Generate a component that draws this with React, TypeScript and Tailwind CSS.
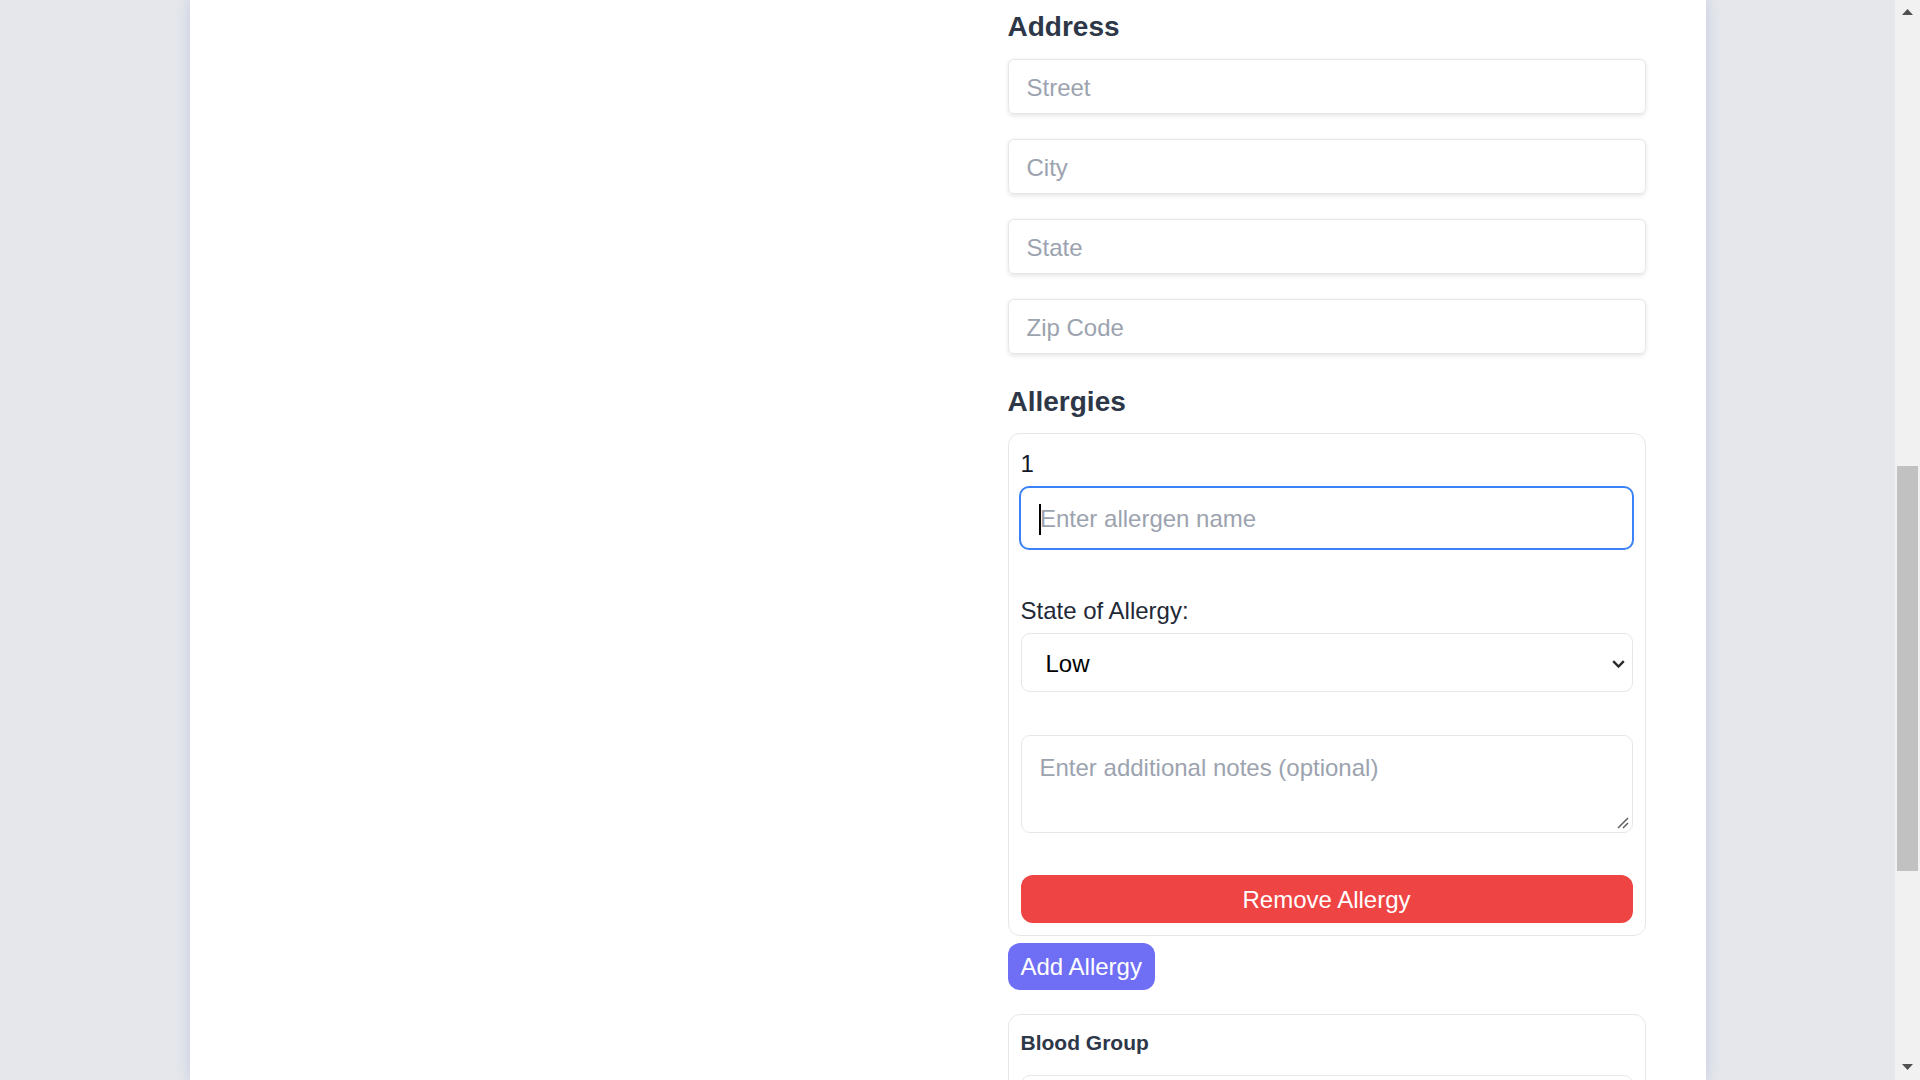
import { ReactNode } from 'react'

function Field({ children }: { children: ReactNode }) {
  return (
    <div className="flex h-[55px] items-center rounded-[6px] border border-[#e5e7eb] px-[18px] pt-[2px] text-[24px] text-[#9ca3af] shadow-[0_1.5px_4px_rgba(0,0,0,0.1)]">
      {children}
    </div>
  )
}

function Scrollbar() {
  return (
    <div className="flex h-full w-[25px] flex-col bg-[#f1f1f1]">
      <div className="flex h-[25px] justify-center pt-[9px]">
        <svg width="11" height="6" viewBox="0 0 11 6">
          <path d="M0 6 L5.5 0 L11 6 Z" fill="#505050" />
        </svg>
      </div>
      <div className="mx-[2px] mt-[441px] h-[405px] bg-[#c1c1c1]" />
      <div className="flex-1" />
      <div className="flex h-[25px] justify-center pt-[9px]">
        <svg width="11" height="6" viewBox="0 0 11 6">
          <path d="M0 0 L5.5 6 L11 0 Z" fill="#505050" />
        </svg>
      </div>
    </div>
  )
}

export default function App() {
  return (
    <div className="flex h-[1080px] w-[1920px] overflow-hidden bg-gray-200 font-['Liberation_Sans',Arial,sans-serif]">
      <div className="flex flex-1 justify-center">
        <div className="h-full w-[1516px] bg-white px-[60px] shadow-[0_0_14px_rgba(80,105,200,0.22)]">
          <div className="grid grid-cols-2 gap-x-[120px]">
            <div />
            <div className="flex flex-col">
              <h2 className="mt-[6px] text-[28px] font-bold leading-[42px] text-[#2d3748]">Address</h2>
              <div className="mt-[11px] flex flex-col gap-[25px]">
                <Field>Street</Field>
                <Field>City</Field>
                <Field>State</Field>
                <Field>Zip Code</Field>
              </div>

              <h2 className="mt-[27px] text-[28px] font-bold leading-[42px] text-[#2d3748]">Allergies</h2>
              <div className="mt-[10px] flex flex-col rounded-[12px] border border-[#e5e7eb] p-[12px]">
                <div className="text-[24px] leading-[36px] text-gray-900">1</div>
                <div className="-mx-[1.5px] mt-[4px] flex h-[64px] items-center rounded-[10px] border-2 border-[#3b82f6] pl-[18px] pt-[2px] text-[24px] text-[#9ca3af]">
                  <span className="h-[31px] w-[1.5px] bg-black" />
                  <span className="-ml-[0.5px]">Enter allergen name</span>
                </div>
                <div className="mt-[43px] text-[24px] leading-[36px] text-[#1f2937]">State of Allergy:</div>
                <div className="mt-[4px] flex h-[59px] items-center justify-between rounded-[9px] border border-[#e5e7eb] pl-[24px] pr-[7px] pt-[2px] text-[24px] text-black">
                  <span>Low</span>
                  <svg width="13" height="8" viewBox="0 0 13 8">
                    <path d="M1.2 1.2 L6.5 6.5 L11.8 1.2" fill="none" stroke="#2b2b2b" strokeWidth="2.4" />
                  </svg>
                </div>
                <div className="relative mt-[43px] h-[98px] rounded-[9px] border border-[#e5e7eb] pl-[18px] pt-[14px] text-[24px] leading-[36px] text-[#9ca3af]">
                  Enter additional notes (optional)
                  <svg className="absolute bottom-[3px] right-[3px]" width="12" height="12" viewBox="0 0 12 12">
                    <path d="M1 11 L11 1 M6 11 L11 6" stroke="#5f5f5f" strokeWidth="1.5" />
                  </svg>
                </div>
                <button className="mt-[42px] flex h-[48px] items-center justify-center rounded-[12px] bg-[#ef4444] pt-[2px] text-[24px] text-white">
                  Remove Allergy
                </button>
              </div>

              <button className="mt-[7px] flex h-[47px] items-center self-start rounded-[12px] bg-[#6f6ff6] px-[13px] pt-[1px] text-[24px] text-white">
                Add Allergy
              </button>

              <div className="mt-[24px] rounded-[12px] border border-[#e5e7eb] px-[12px] pt-[13px]">
                <div className="text-[21px] font-bold leading-[30px] text-[#2d3748]">Blood Group</div>
                <div className="mt-[17px] h-[55px] rounded-[9px] border border-[#e5e7eb]" />
              </div>
            </div>
          </div>
        </div>
      </div>
      <Scrollbar />
    </div>
  )
}
